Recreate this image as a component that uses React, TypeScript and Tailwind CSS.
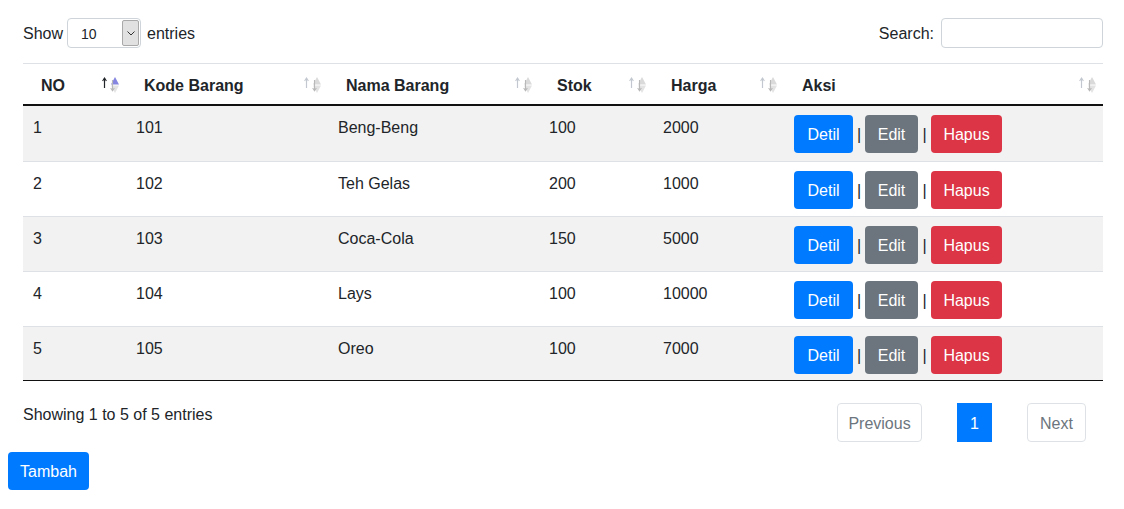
import React from "react";

type Barang = { no: number; kode: string; nama: string; stok: number; harga: number };

const data: Barang[] = [
  { no: 1, kode: "101", nama: "Beng-Beng", stok: 100, harga: 2000 },
  { no: 2, kode: "102", nama: "Teh Gelas", stok: 200, harga: 1000 },
  { no: 3, kode: "103", nama: "Coca-Cola", stok: 150, harga: 5000 },
  { no: 4, kode: "104", nama: "Lays", stok: 100, harga: 10000 },
  { no: 5, kode: "105", nama: "Oreo", stok: 100, harga: 7000 },
];

const columns = [
  { label: "NO", width: "w-[103px]" },
  { label: "Kode Barang", width: "w-[202px]" },
  { label: "Nama Barang", width: "w-[211px]" },
  { label: "Stok", width: "w-[114px]" },
  { label: "Harga", width: "w-[131px]" },
  { label: "Aksi", width: "w-[319px]" },
];

// sort arrows like dataTables (up arrow + double triangle)
const SortIcon = ({ active }: { active?: boolean }) => (
  <svg width="18" height="20" viewBox="0 0 18 20" fill="none">
    <path d="M2.5 3.5V13" stroke={active ? "#212529" : "#c3c8d0"} strokeWidth="1.2" />
    <path d="M0.6 6L2.5 3L4.4 6" stroke={active ? "#212529" : "#c3c8d0"} strokeWidth="1.1" />
    <path d="M13 2L17 9.5H9Z" fill={active ? "#8585e0" : "#dadada"} />
    <path d="M9 10.5H17L13 18Z" fill="#e3e3e3" />
    <path d="M10.5 5V15.5" stroke="#b8b8b8" strokeWidth="1.1" />
    <path d="M8.7 13L10.5 15.8L12.3 13" stroke="#b8b8b8" strokeWidth="1.1" />
  </svg>
);

const Btn = ({ label, color, width }: { label: string; color: string; width: string }) => (
  <span className={`inline-block rounded-[4px] pt-[8px] pb-[6px] text-center leading-6 text-white ${color} ${width}`}>
    {label}
  </span>
);

const Sep = ({ width }: { width: string }) => <span className={`inline-block text-center ${width}`}>|</span>;

export default function App() {
  return (
    <div className="min-h-screen bg-white font-['Liberation_Sans',Arial,sans-serif] text-base text-[#212529]">
      <div className="w-[1103px] pl-[23px] pt-[18px]">
        {/* length + search */}
        <div className="flex h-[30px] items-center justify-between">
          <div className="flex items-center">
            <span className="relative top-[1px]">Show</span>
            <div className="ml-[4px] mr-[6px] flex h-[30px] w-[74px] items-center rounded-[4px] border border-[#ced4da] bg-white">
              <span className="relative top-[1px] ml-[13px] flex-1 text-[14px]">10</span>
              <span className="mr-[1px] flex h-[26px] w-[17px] items-center justify-center rounded-[2px] border border-[#a9a9a9] bg-[#e1e1e1]">
                <svg width="8" height="5" viewBox="0 0 8 5">
                  <path d="M0.5 0.5L4 4L7.5 0.5" stroke="#333" fill="none" strokeWidth="1" />
                </svg>
              </span>
            </div>
            <span className="relative top-[1px]">entries</span>
          </div>
          <div className="flex items-center">
            <span className="relative top-[1px]">Search:</span>
            <div className="ml-[7px] h-[30px] w-[162px] rounded-[4px] border border-[#ced4da] bg-white" />
          </div>
        </div>

        {/* table */}
        <table className="mt-[15px] w-[1080px] table-fixed border-separate border-spacing-0">
          <thead>
            <tr>
              {columns.map((c, i) => (
                <th
                  key={c.label}
                  className={`relative box-border h-[43px] border-t border-b-2 border-t-[#dee2e6] border-b-[#111] pl-[18px] pt-[4px] text-left align-middle font-bold ${c.width}`}
                >
                  {c.label}
                  <span className="absolute right-[6px] top-[11px] flex">
                    <SortIcon active={i === 0} />
                  </span>
                </th>
              ))}
            </tr>
          </thead>
          <tbody>
            {data.map((b, i) => {
              const striped = i % 2 === 0 ? "bg-[#f2f2f2]" : "bg-white";
              const top = i === 0 ? "" : "border-t border-t-[#dee2e6]";
              const bottom = i === data.length - 1 ? "border-b border-b-[#111]" : "";
              const cell = `box-border h-[55px] pl-[10px] align-top ${top} ${bottom}`;
              return (
                <tr key={b.no} className={striped}>
                  <td className={`${cell} pt-[10px]`}>{b.no}</td>
                  <td className={`${cell} pt-[10px]`}>{b.kode}</td>
                  <td className={`${cell} pt-[10px]`}>{b.nama}</td>
                  <td className={`${cell} pt-[10px]`}>{b.stok}</td>
                  <td className={`${cell} pt-[10px]`}>{b.harga}</td>
                  <td className={`${cell} whitespace-nowrap pt-[8px]`}>
                    <span className="relative top-[1px] flex items-baseline">
                      <Btn label="Detil" color="bg-[#007bff]" width="w-[59px]" />
                      <Sep width="w-[12px]" />
                      <Btn label="Edit" color="bg-[#6c757d]" width="w-[53px]" />
                      <Sep width="w-[13px]" />
                      <Btn label="Hapus" color="bg-[#dc3545]" width="w-[71px]" />
                    </span>
                  </td>
                </tr>
              );
            })}
          </tbody>
        </table>

        {/* info + pagination */}
        <div className="mt-[20px] flex items-start justify-between">
          <div className="pt-[2px] leading-6">Showing 1 to 5 of 5 entries</div>
          <div className="mt-[2px] mr-[17px] flex gap-[35px]">
            <span className="w-[85px] rounded-[4px] border border-[#dee2e6] pt-[8px] pb-[5px] text-center leading-6 text-[#6c757d]">
              Previous
            </span>
            <span className="w-[35px] border border-[#007bff] bg-[#007bff] pt-[8px] pb-[5px] text-center leading-6 text-white">
              1
            </span>
            <span className="w-[59px] rounded-[4px] border border-[#dee2e6] pt-[8px] pb-[5px] text-center leading-6 text-[#6c757d]">
              Next
            </span>
          </div>
        </div>
      </div>

      <div className="ml-[8px] mt-[10px] inline-block w-[81px] rounded-[4px] bg-[#007bff] pt-[8px] pb-[6px] text-center leading-6 text-white">
        Tambah
      </div>
    </div>
  );
}
